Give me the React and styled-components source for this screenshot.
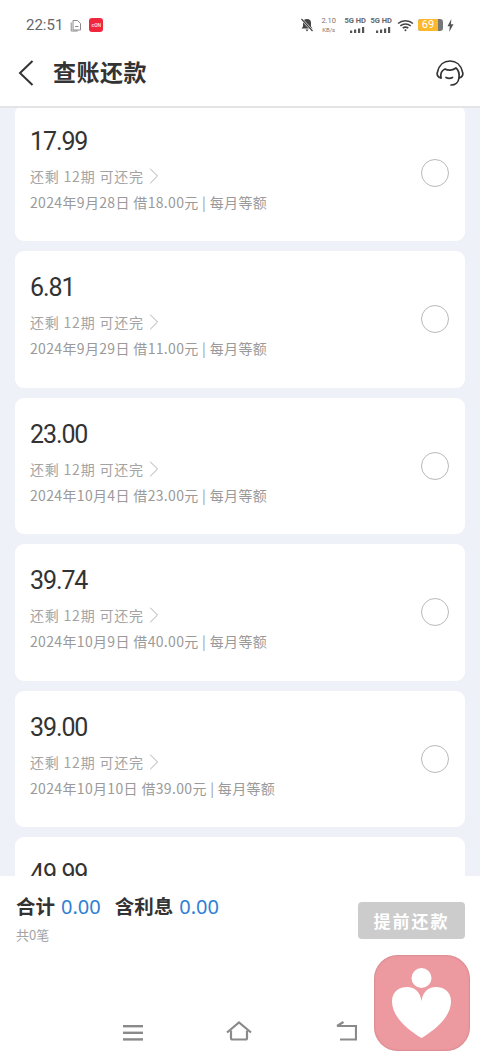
import React from "react";
import styled, { createGlobalStyle } from "styled-components";
import { ChevronRight } from "lucide-react";

const GlobalStyle = createGlobalStyle`
  html, body {
    margin: 0;
    padding: 0;
    background: #fff;
  }
  * {
    box-sizing: border-box;
  }
`;

// the last card is cut off by the footer, only its amount can be read
const loans = [
  { id: 1, amount: "17.99", date: "2024年9月28日", borrowed: "18.00" },
  { id: 2, amount: "6.81", date: "2024年9月29日", borrowed: "11.00" },
  { id: 3, amount: "23.00", date: "2024年10月4日", borrowed: "23.00" },
  { id: 4, amount: "39.74", date: "2024年10月9日", borrowed: "40.00" },
  { id: 5, amount: "39.00", date: "2024年10月10日", borrowed: "39.00" },
  { id: 6, amount: "49.99" },
];

const App = () => {
  return (
    <>
      <GlobalStyle />
      <Page>
        <StatusBar>
          <StatusLeft>
            <Time>22:51</Time>
            <svg width="12" height="13" viewBox="0 0 12 13" fill="none" stroke="#8a8a8a" strokeWidth="1">
              <path d="M3 1.500h4.500l3 3v6.500h-7.500z" />
              <path d="M1.200 3.500v8.500h6.500" />
              <path d="M5 7.500h3.500" />
            </svg>
            <RedBadge>
              <span>cON</span>
            </RedBadge>
          </StatusLeft>
          <StatusRight>
            <svg width="14" height="14" viewBox="0 0 14 14">
              <path d="M7 1a4 4 0 0 1 4 4v3.500l1.500 2h-11L3 8.500V5a4 4 0 0 1 4-4z" fill="#444" />
              <path d="M5.500 11.500h3L7 13.500z" fill="#444" />
              <path d="M1.500 1l11 12" stroke="#fff" strokeWidth="2.400" />
              <path d="M1.500 1l11 12" stroke="#444" strokeWidth="1.200" />
            </svg>
            <Speed>
              <b>2.10</b>
              <i>KB/s</i>
            </Speed>
            <SignalGroup />
            <SignalGroup />
            <svg width="18" height="13" viewBox="-1 0 18 13" fill="none" stroke="#444" strokeWidth="1.500">
              <path d="M1 4.500c4.200-3.600 10.800-3.600 15 0" />
              <path d="M3.300 6.900c3-2.500 7.400-2.500 10.400 0" />
              <path d="M5.700 9.200c1.700-1.300 3.900-1.300 5.600 0" />
              <circle cx="8.500" cy="11.300" r="1" fill="#444" stroke="none" />
            </svg>
            <Battery>
              <BatteryLevel>69</BatteryLevel>
            </Battery>
            <svg width="7" height="13" viewBox="0 0 7 13">
              <path d="M4.300 0L0.500 7.300h2.300L2.200 13 6.500 5.200H4z" fill="#555" />
            </svg>
          </StatusRight>
        </StatusBar>
        <Header>
          <HeaderLeft>
            <svg width="16" height="26" viewBox="0 0 16 26" fill="none" stroke="#333" strokeWidth="2">
              <path d="M14.500 1L2 13l12.500 12" />
            </svg>
            <Title>查账还款</Title>
          </HeaderLeft>
          <svg width="28" height="26" viewBox="0 0 28 26" fill="none" stroke="#333" strokeWidth="1.700" strokeLinecap="round">
            <path d="M5 18C1.800 17.500 .5 14.500 1.500 12 3 5 8 1 14 1c6 0 11 4 12.500 11 1 2.500-.3 5.500-3.500 6" />
            <path d="M5 18c-.8-4 .7-7.500 4-9 3 1.800 8 1.500 11-1 2.500 2 3.500 5.500 3 10-.5 4-3.500 7-8 7" />
            <path d="M10 17.500c2 1.100 4.500 1.100 6.500 0" />
          </svg>
        </Header>
        <ListArea>
          <List>
            {loans.map((loan) => (
              <Card key={loan.id}>
                <CardBody>
                  <Amount>{loan.amount}</Amount>
                  {loan.date && (
                    <>
                      <Plan>
                        还剩 12期 可还完
                        <ChevronRight size={28} strokeWidth={0.8} color="#a8a8a8" />
                      </Plan>
                      <Detail>
                        {loan.date} 借{loan.borrowed}元 | 每月等额
                      </Detail>
                    </>
                  )}
                </CardBody>
                {loan.date && <Radio />}
              </Card>
            ))}
          </List>
        </ListArea>
        <Footer>
          <FooterRow>
            <div>
              <Totals>
                <TotalLabel>合计</TotalLabel>
                <TotalValue>0.00</TotalValue>
                <TotalLabel $gap>含利息</TotalLabel>
                <TotalValue>0.00</TotalValue>
              </Totals>
              <Count>共0笔</Count>
            </div>
            <PayButton disabled>提前还款</PayButton>
          </FooterRow>
          <NavBar>
            <svg width="20" height="16" viewBox="0 0 20 16" fill="#8a8a8a">
              <rect y="0" width="20" height="2.400" />
              <rect y="6.600" width="20" height="2.400" />
              <rect y="13.200" width="20" height="2.400" />
            </svg>
            <svg width="26" height="20" viewBox="0 0 26 20" fill="none" stroke="#8a8a8a" strokeWidth="2.200">
              <path d="M1 11.500L13 1.500l12 10" />
              <path d="M5 9.500V17a1.500 1.500 0 0 0 1.500 1.500h13A1.500 1.500 0 0 0 21 17V9.500" />
            </svg>
            <svg width="22" height="20" viewBox="0 0 22 20" fill="none" stroke="#8a8a8a" strokeWidth="2.200">
              <path d="M2 5h19v13.500H5" />
              <path d="M8.500 1L2 5" />
            </svg>
          </NavBar>
          <FloatingApp>
            <svg width="96" height="96" viewBox="0 0 96 96">
              <circle cx="47.500" cy="23" r="10" fill="#fff" />
              <path
                d="M47.500 83C34 75 18 62 18 46.500 18 36 26 32 33 32c7 0 13 4 14.500 14C49 36 55 32 62 32c7 0 15 4 15 14.500C77 62 61 75 47.500 83z"
                fill="#fff"
              />
            </svg>
          </FloatingApp>
        </Footer>
      </Page>
    </>
  );
};

const SignalGroup = () => (
  <Signal>
    <span>5G HD</span>
    <svg width="16" height="6" viewBox="0 0 16 6" fill="#555">
      <rect x="0" y="3.500" width="2.200" height="2.500" />
      <rect x="4" y="2.500" width="2.200" height="3.500" />
      <rect x="8" y="1.500" width="2.200" height="4.500" />
      <rect x="12" y="0" width="2.200" height="6" />
    </svg>
  </Signal>
);

const Page = styled.div`
  position: relative;
  display: flex;
  flex-direction: column;
  width: 480px;
  height: 1061px;
  overflow: hidden;
  background: #eef2f8;
  font-family: "Noto Sans CJK SC", "Noto Sans", sans-serif;
`;

const StatusBar = styled.div`
  display: flex;
  align-items: center;
  justify-content: space-between;
  height: 50px;
  padding: 0 26px;
  background: #fff;
`;

const StatusLeft = styled.div`
  display: flex;
  align-items: center;
  gap: 7px;
`;

const Time = styled.span`
  font-family: Roboto, sans-serif;
  font-size: 15px;
  color: #666;
`;

const RedBadge = styled.div`
  display: flex;
  align-items: center;
  justify-content: center;
  width: 14px;
  height: 14px;
  border-radius: 3px;
  background: #f0263f;
  overflow: hidden;

  span {
    font-family: Roboto, sans-serif;
    font-size: 5px;
    font-weight: 700;
    line-height: 6px;
    color: #ffd5da;
  }
`;

const StatusRight = styled.div`
  display: flex;
  align-items: center;
  gap: 4px;
`;

const Speed = styled.div`
  display: flex;
  flex-direction: column;
  align-items: center;
  margin: 0 4px 0 3px;
  line-height: 9px;
  color: #777;
  font-family: Roboto, sans-serif;

  b {
    font-weight: 400;
    font-size: 7.500px;
  }
  i {
    font-style: normal;
    font-size: 6px;
  }
`;

const Signal = styled.div`
  display: flex;
  flex-direction: column;
  align-items: flex-end;
  gap: 2px;
  width: 22px;
  font-family: Roboto, sans-serif;
  font-size: 7.500px;
  font-weight: 700;
  line-height: 8px;
  color: #666;
  white-space: nowrap;
`;

const Battery = styled.div`
  width: 25px;
  height: 12px;
  border-radius: 3px;
  background: #777;
  overflow: hidden;
`;

const BatteryLevel = styled.div`
  width: 20px;
  height: 100%;
  background: #fdb92c;
  color: #fff;
  font-family: Roboto, sans-serif;
  font-size: 11px;
  line-height: 12px;
  text-align: center;
`;

const Header = styled.div`
  position: relative;
  z-index: 1;
  display: flex;
  align-items: center;
  justify-content: space-between;
  height: 58px;
  padding: 0 16px 10px 18px;
  background: #fff;
  border-bottom: 2px solid #e4e4e6;
`;

const HeaderLeft = styled.div`
  display: flex;
  align-items: center;
  gap: 19px;
`;

const Title = styled.div`
  font-size: 23px;
  line-height: 30px;
  font-weight: 700;
  letter-spacing: 0.500px;
  color: #333;
  margin-top: -4px;
`;

const ListArea = styled.div`
  flex: 1;
  min-height: 0;
  overflow: hidden;
`;

const List = styled.div`
  display: flex;
  flex-direction: column;
  gap: 10px;
  margin-top: -3.500px;
  padding: 0 15px;
`;

const Card = styled.div`
  display: flex;
  flex: none;
  align-items: center;
  justify-content: space-between;
  height: 136.500px;
  padding: 0 16px 0 15px;
  border-radius: 9px;
  background: #fff;
`;

const CardBody = styled.div`
  display: flex;
  flex-direction: column;
  align-self: flex-start;
  padding-top: 20px;
`;

const Amount = styled.div`
  font-family: Roboto, sans-serif;
  font-size: 25px;
  line-height: 34px;
  font-weight: 400;
  letter-spacing: -1.100px;
  color: #333;
`;

const Plan = styled.div`
  display: flex;
  align-items: center;
  margin-top: 7px;
  font-size: 14px;
  line-height: 20px;
  letter-spacing: 0.800px;
  color: #a3a3a3;

  svg {
    margin: -4px 0 -4px -4px;
  }
`;

const Detail = styled.div`
  margin-top: 6px;
  font-size: 14px;
  line-height: 20px;
  letter-spacing: 0.340px;
  color: #9a9a9a;
`;

const Radio = styled.div`
  width: 28px;
  height: 28px;
  border: 1px solid #b9b9b9;
  border-radius: 50%;
`;

const Footer = styled.div`
  position: relative;
  flex: none;
  display: flex;
  flex-direction: column;
  justify-content: space-between;
  height: 185px;
  padding: 15px 15px 20px 16px;
  background: #fff;
`;

const FooterRow = styled.div`
  display: flex;
  align-items: flex-start;
  justify-content: space-between;
`;

const Totals = styled.div`
  display: flex;
  align-items: baseline;
  gap: 6px;
`;

const TotalLabel = styled.span`
  font-size: 19.500px;
  font-weight: 700;
  line-height: 30px;
  color: #333;
  margin-left: ${(props) => (props.$gap ? "8px" : "0")};
`;

const TotalValue = styled.span`
  font-family: "Noto Sans", sans-serif;
  font-size: 20px;
  line-height: 30px;
  color: #2f7fd4;
`;

const Count = styled.div`
  margin-top: 4px;
  font-size: 13px;
  line-height: 18px;
  color: #a3a3a3;
`;

const PayButton = styled.button`
  width: 107px;
  height: 37px;
  margin-top: 11px;
  padding: 0;
  border: 0;
  border-radius: 4px;
  background: #cccccc;
  color: #fff;
  font-family: inherit;
  font-size: 17px;
  font-weight: 700;
  letter-spacing: 2px;
`;

const NavBar = styled.div`
  display: flex;
  align-items: flex-end;
  gap: 83px;
  height: 20px;
  padding-left: 107px;
`;

const FloatingApp = styled.div`
  position: absolute;
  top: 79px;
  right: 10px;
  width: 96px;
  height: 96px;
  border-radius: 24px;
  background: #ec9aa0;
  box-shadow: inset 0 0 2px rgba(150, 70, 75, 0.5);
`;

export default App;
